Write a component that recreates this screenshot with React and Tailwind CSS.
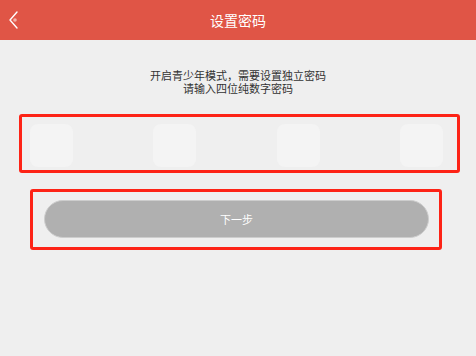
import React from "react";

const cjk = { fontFamily: '"Noto Sans CJK SC", "Noto Sans", sans-serif' };

const BackIcon = () => (
  <svg width="14" height="20" viewBox="0 0 14 20" fill="none">
    <path d="M9 2 L2 10 L9 18" stroke="#fff" strokeWidth="1.4" strokeLinecap="round" strokeLinejoin="round" />
    <circle cx="7" cy="10" r="1.8" fill="#f3b1a8" />
  </svg>
);

export default function App() {
  return (
    <div className="w-[476px] h-[356px] bg-[#efefef] overflow-hidden" style={cjk}>
      {/* 标题栏 */}
      <header className="relative h-[40px] bg-[#e05546] flex items-center justify-center">
        <button className="absolute left-[8px] top-[10px]">
          <BackIcon />
        </button>
        <h1 className="text-white text-[14px] leading-none">设置密码</h1>
      </header>

      <main className="pt-[29px]">
        <div className="text-center text-[#333] text-[11px] leading-[13px]">
          <p>开启青少年模式，需要设置独立密码</p>
          <p>请输入四位纯数字密码</p>
        </div>

        {/* 密码输入 */}
        <div className="mt-[19px] ml-[19px] w-[441px] h-[59px] border-[3px] border-[#fd2316] rounded-[3px] flex items-center justify-between pl-[8px] pr-[14px] pt-[3px]">
          {[0, 1, 2, 3].map((i) => (
            <div key={i} className="w-[43px] h-[43px] rounded-[8px] bg-[#f4f4f4]" />
          ))}
        </div>

        <div className="mt-[16px] ml-[30px] w-[412px] h-[61px] border-[3px] border-[#fd2316] rounded-[3px] pl-[11px] pt-[8px]">
          <button className="w-[385px] h-[38px] rounded-full bg-[#b0b0b0] border border-[#cdcdcd] text-white text-[11px] flex items-center justify-center">
            下一步
          </button>
        </div>
      </main>
    </div>
  );
}
